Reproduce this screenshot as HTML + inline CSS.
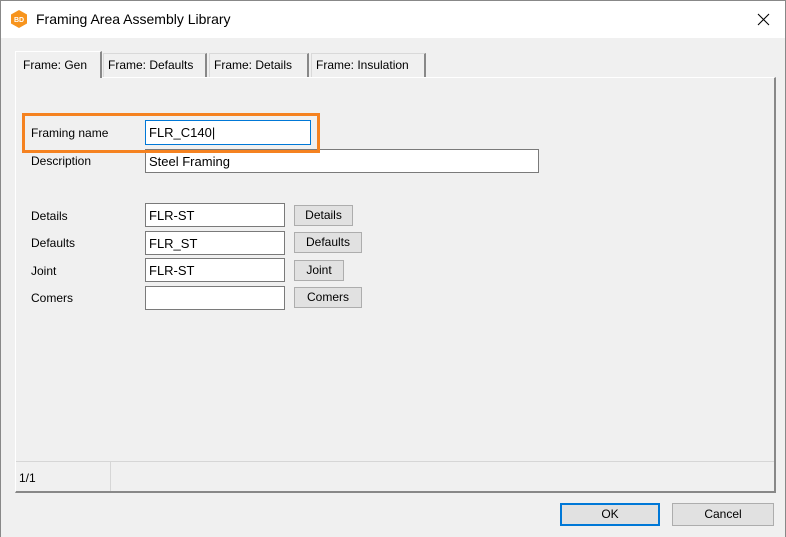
<!DOCTYPE html>
<html><head><style>
*{box-sizing:border-box;margin:0;padding:0}
body{width:786px;height:537px;background:#f0f0f0;font-family:"Liberation Sans",sans-serif;font-size:12px;color:#000;position:relative;overflow:hidden}
.a{position:absolute}
.win{left:0;top:0;width:786px;height:537px;border:1px solid #888;border-bottom:none}
.title{left:1px;top:1px;width:784px;height:37px;background:#fff}
.inp{position:absolute;background:#fff;border:1px solid #7a7a7a;padding:4px 3px 0;font-size:13px;height:24px}
.btn{position:absolute;background:#e1e1e1;border:1px solid #adadad;text-align:center;font-size:12px;line-height:19px;height:21px}
.lbl{position:absolute;font-size:12px}
.tab{position:absolute;top:53px;height:24px;border:1px solid #d9d9d9;border-right:2px solid #888;border-bottom:none;padding:4px 4px 0;font-size:12px;background:#f0f0f0}
</style></head><body>
<div class="a win"></div>
<div class="a title"></div>
<svg class="a" style="left:9px;top:9px" width="20" height="20" viewBox="0 0 20 20"><polygon points="10,1 18,5.5 18,14.5 10,19 2,14.5 2,5.5" fill="#f7941d"/><text x="10" y="13" font-size="7" font-family="Liberation Sans" fill="#fff" text-anchor="middle" font-weight="bold">BD</text></svg>
<div class="a" style="left:36px;top:11px;font-size:14px">Framing Area Assembly Library</div>
<svg class="a" style="left:757px;top:13px" width="13" height="13"><path d="M1 1L12 12M12 1L1 12" stroke="#000" stroke-width="1.1"/></svg>
<div class="a" style="left:15px;top:77px;width:761px;height:416px;border-top:1px solid #fff;border-left:1px solid #fff;border-right:2px solid #888;border-bottom:2px solid #888"></div>
<div class="a" style="left:16px;top:461px;width:758px;height:1px;background:#d6d6d6"></div>
<div class="a" style="left:110px;top:462px;width:1px;height:29px;background:#d6d6d6"></div>
<div class="lbl" style="left:19px;top:471px">1/1</div>
<div class="tab" style="left:103px;width:104px">Frame: Defaults</div>
<div class="tab" style="left:209px;width:100px">Frame: Details</div>
<div class="tab" style="left:311px;width:115px">Frame: Insulation</div>
<div class="tab" style="left:15px;top:51px;height:27px;width:87px;border-left:1px solid #fff;border-top:1px solid #fff;padding-top:6px;padding-left:7px">Frame: Gen</div>
<div class="lbl" style="left:31px;top:126px">Framing name</div>
<div class="inp" style="left:145px;top:120px;width:166px;border-color:#0078d7;height:25px">FLR_C140|</div>
<div class="lbl" style="left:31px;top:154px">Description</div>
<div class="inp" style="left:145px;top:149px;width:394px">Steel Framing</div>
<div class="a" style="left:22px;top:113px;width:298px;height:40px;border:3px solid #f58220;z-index:5"></div>
<div class="lbl" style="left:31px;top:209px">Details</div>
<div class="inp" style="left:145px;top:203px;width:140px">FLR-ST</div>
<div class="btn" style="left:294px;top:205px;width:59px">Details</div>
<div class="lbl" style="left:31px;top:236px">Defaults</div>
<div class="inp" style="left:145px;top:231px;width:140px">FLR_ST</div>
<div class="btn" style="left:294px;top:232px;width:68px">Defaults</div>
<div class="lbl" style="left:31px;top:264px">Joint</div>
<div class="inp" style="left:145px;top:258px;width:140px">FLR-ST</div>
<div class="btn" style="left:294px;top:260px;width:50px">Joint</div>
<div class="lbl" style="left:31px;top:291px">Comers</div>
<div class="inp" style="left:145px;top:286px;width:140px"></div>
<div class="btn" style="left:294px;top:287px;width:68px">Comers</div>
<div class="btn" style="left:560px;top:503px;width:100px;height:23px;border:2px solid #0078d7;line-height:18px">OK</div>
<div class="btn" style="left:672px;top:503px;width:102px;height:23px;line-height:20px">Cancel</div>
</body></html>
